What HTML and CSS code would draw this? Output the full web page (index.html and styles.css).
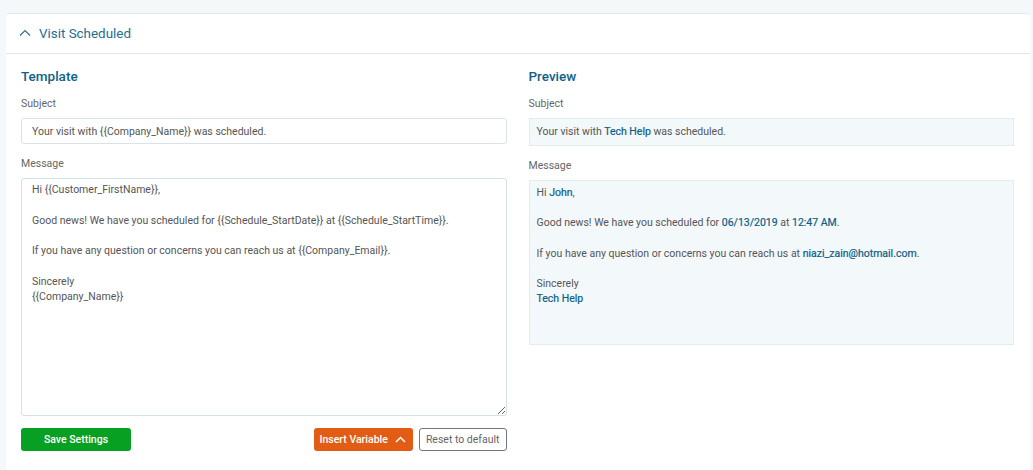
FILE: index.html
```html
<!DOCTYPE html>
<html lang="en">
<head>
    <meta charset="UTF-8">
    <meta name="viewport" content="width=device-width, initial-scale=1.0">
    <title>Visit Scheduled</title>
    <link rel="stylesheet" href="styles.css">
</head>
<body>
    <div class="card">
        <div class="card-header">
            <svg class="chevron" width="12" height="8" viewBox="0 0 12 8"><path d="M1 6.5 L6 1.5 L11 6.5" fill="none" stroke="#2a7196" stroke-width="1.2"/></svg>
            <span class="card-title">Visit Scheduled</span>
        </div>
        <div class="card-body">
            <div class="column">
                <div class="section-title">Template</div>
                <div class="label">Subject</div>
                <input class="subject-input" type="text" value="Your visit with {{Company_Name}} was scheduled.">
                <div class="label label-message">Message</div>
                <textarea class="message-input">Hi {{Customer_FirstName}},

Good news! We have you scheduled for {{Schedule_StartDate}} at {{Schedule_StartTime}}.

If you have any question or concerns you can reach us at {{Company_Email}}.

Sincerely
{{Company_Name}}</textarea>
                <div class="actions">
                    <button class="btn btn-save">Save Settings</button>
                    <div class="actions-right">
                        <button class="btn btn-insert">Insert Variable
                            <svg width="11" height="7" viewBox="0 0 11 7"><path d="M1 6 L5.5 1.5 L10 6" fill="none" stroke="#fff" stroke-width="1.5"/></svg>
                        </button>
                        <button class="btn btn-reset">Reset to default</button>
                    </div>
                </div>
            </div>
            <div class="column">
                <div class="section-title">Preview</div>
                <div class="preview">
                    <div class="label">Subject</div>
                    <div class="preview-subject">Your visit with <span class="var">Tech Help</span> was scheduled.</div>
                    <div class="label label-message">Message</div>
                    <div class="preview-message">
                        <p>Hi <span class="var">John</span>,</p>
                        <p>Good news! We have you scheduled for <span class="var">06/13/2019</span> at <span class="var">12:47 AM</span>.</p>
                        <p>If you have any question or concerns you can reach us at <span class="var">niazi_zain@hotmail.com</span>.</p>
                        <p>Sincerely<br><span class="var">Tech Help</span></p>
                    </div>
                </div>
            </div>
        </div>
    </div>
</body>
</html>
```

FILE: styles.css
```css
body {
    margin: 0;
    background-color: #f4f8fb;
    font-family: Roboto, "Liberation Sans", Arial, sans-serif;
    color: #555;
    font-size: 10.5px;
}

.card {
    margin: 13px 3px 0 6px;
    background-color: #fff;
    border-top: 1px solid #e2e8ec;
    border-radius: 3px 3px 0 0;
    height: 470px;
}

.card-header {
    display: flex;
    align-items: center;
    height: 39px;
    padding-left: 13px;
    border-bottom: 1px solid #e1e6e9;
}

.chevron {
    margin-right: 8px;
    margin-top: -1px;
}

.card-title {
    font-size: 13.4px;
    color: #1f6e93;
}

.card-body {
    display: flex;
    gap: 22px;
    padding: 13px 16px 0 15px;
}

.column {
    flex: 1;
    display: flex;
    flex-direction: column;
}

.section-title {
    font-size: 13.5px;
    font-weight: 500;
    color: #0f6189;
    height: 18px;
    line-height: 18px;
}

.label {
    color: #666;
    font-size: 10.5px;
    margin-top: 11px;
    height: 15px;
    line-height: 15px;
}

.label-message {
    margin-top: 12px;
}

.subject-input {
    margin-top: 7px;
    height: 26px;
    box-sizing: border-box;
    border: 1px solid #d8e4ea;
    border-radius: 3px;
    padding: 0 10px;
    font-family: inherit;
    font-size: 10.5px;
    color: #555;
}

.message-input {
    margin-top: 7px;
    height: 238px;
    box-sizing: border-box;
    border: 1px solid #d3e1e8;
    border-radius: 3px;
    padding: 3px 10px;
    font-family: inherit;
    font-size: 10.5px;
    line-height: 15.3px;
    color: #555;
    resize: vertical;
}

.actions {
    display: flex;
    justify-content: space-between;
    margin-top: 12px;
}

.actions-right {
    display: flex;
    gap: 6px;
}

.btn {
    height: 23px;
    border-radius: 3px;
    font-family: inherit;
    font-size: 10.5px;
    cursor: pointer;
    padding: 0 6px;
}

.btn-save {
    width: 110px;
    background-color: #08a022;
    border: none;
    color: #fff;
    font-weight: 500;
}

.btn-insert {
    display: flex;
    align-items: center;
    gap: 7px;
    background-color: #e25c14;
    border: none;
    color: #fff;
    font-weight: 500;
    padding: 0 7px 0 6px;
}

.btn-reset {
    background-color: #fff;
    border: 1px solid #6e7680;
    color: #666;
}

.preview {
    display: flex;
    flex-direction: column;
}

.preview-subject {
    margin-top: 7px;
    height: 28px;
    box-sizing: border-box;
    line-height: 26px;
    padding: 0 7px;
    background-color: #f3f8fb;
    border: 1px solid #e3ecf1;
}

.preview-message {
    margin-top: 7px;
    height: 165px;
    box-sizing: border-box;
    padding: 4px 7px;
    background-color: #f3f8fb;
    border: 1px solid #e3ecf1;
    line-height: 15px;
}

.preview-message p {
    margin: 0 0 15.3px;
}

.var {
    color: #0d5e86;
    -webkit-text-stroke: 0.2px #0d5e86;
}
```
